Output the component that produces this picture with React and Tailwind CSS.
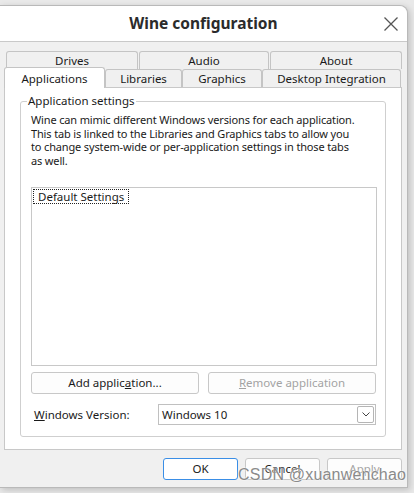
import React from "react";

const font = { fontFamily: '"Noto Sans", "Open Sans", sans-serif' };

const Tab = ({ label, className }) => (
  <div
    className={`flex items-center justify-center border border-[#c4c4c4] border-b-0 rounded-t-[3px] bg-[#f0f0f0] text-[11.5px] text-[#1a1a1a] ${className}`}
  >
    {label}
  </div>
);

const Button = ({ children, disabled, primary, className }) => (
  <button
    className={`h-[22px] rounded-[3px] border text-[11.5px] leading-none ${
      primary ? "border-[#3a8ee6] bg-white" : "border-[#c8c8c8] bg-[#fdfdfd]"
    } ${disabled ? "text-[#a3a3a3]" : "text-[#1a1a1a]"} ${className}`}
  >
    {children}
  </button>
);

const App = () => {
  return (
    <div
      className="relative w-[414px] h-[493px] overflow-hidden bg-[#e9e9e9] pt-[5px]"
      style={font}
    >
      <div className="w-[408px] h-[483px] bg-[#f0f0f0] border-t border-r border-b border-[#b9b9b9] rounded-tr-[8px] shadow-[2px_2px_6px_rgba(0,0,0,0.18)] flex flex-col">
        {/* title bar */}
        <div className="relative h-[36px] bg-white rounded-tr-[8px] border-b border-[#c9c9c9] flex items-center justify-center">
          <span className="text-[15.5px] font-bold text-[#2b2b2b] pt-[1px]">
            Wine configuration
          </span>
          <svg
            className="absolute right-[8px] top-[10px]"
            width="16"
            height="16"
            viewBox="0 0 16 16"
          >
            <path d="M1.5 1.5 L14.5 14.5 M14.5 1.5 L1.5 14.5" stroke="#555" strokeWidth="1.3" fill="none" />
          </svg>
        </div>

        <div className="pl-[4px] pt-[9px]">
          {/* tab row 1 */}
          <div className="flex h-[18px] pl-[2px] gap-[1px]">
            <Tab label="Drives" className="w-[132px]" />
            <Tab label="Audio" className="w-[130px]" />
            <Tab label="About" className="w-[132px]" />
          </div>
          {/* tab row 2 */}
          <div className="relative z-10 flex items-end h-[19px] -mt-[1px]">
            <div className="w-[101px] h-[21px] -mb-[1px] flex items-start pt-[2px] justify-center bg-white border border-[#c4c4c4] border-b-0 rounded-t-[3px] text-[11.5px] text-[#1a1a1a]">
              Applications
            </div>
            <Tab label="Libraries" className="w-[77px] h-[18px]" />
            <Tab label="Graphics" className="w-[80px] h-[18px]" />
            <Tab label="Desktop Integration" className="w-[139px] h-[18px]" />
          </div>

          {/* panel */}
          <div className="w-[398px] h-[363px] bg-white border border-[#c8c8c8] pt-[13px] px-[15px]">
            <div className="relative h-[336px] border border-[#cfcfcf] rounded-[3px] pl-[10px] pr-[8px] pt-[11px]">
              <span className="absolute -top-[8px] left-[6px] bg-white px-[1px] text-[11.5px] leading-[14px] text-[#1a1a1a]">
                Application settings
              </span>
              <p className="text-[11px] leading-[13.5px] tracking-[-0.15px] text-[#1a1a1a] whitespace-nowrap">
                Wine can mimic different Windows versions for each application.
                <br />
                This tab is linked to the Libraries and Graphics tabs to allow you
                <br />
                to change system-wide or per-application settings in those tabs
                <br />
                as well.
              </p>
              <div className="mt-[20px] h-[179px] border border-[#c8c8c8] p-[1px]">
                <div className="w-fit border border-dotted border-[#222] px-[4px] text-[11.5px] leading-[13px] text-[#1a1a1a]">
                  Default Settings
                </div>
              </div>
              <div className="mt-[6px] flex gap-[9px]">
                <Button className="w-[168px]">
                  Add applic<span className="underline">a</span>tion...
                </Button>
                <Button disabled className="w-[168px]">
                  <span className="underline">R</span>emove application
                </Button>
              </div>
              <div className="mt-[10px] flex items-center">
                <span className="w-[127px] pl-[3px] text-[11.5px] text-[#1a1a1a]">
                  <span className="underline">W</span>indows Version:
                </span>
                <div className="w-[218px] h-[21px] border border-[#c0c0c0] flex items-center justify-between pl-[3px] pr-[1px]">
                  <span className="text-[11.5px] text-[#1a1a1a]">Windows 10</span>
                  <div className="w-[17px] h-[17px] border border-[#b5b5b5] rounded-[2px] flex items-center justify-center">
                    <svg width="8" height="5" viewBox="0 0 8 5">
                      <path d="M0.5 0.5 L4 4 L7.5 0.5" stroke="#444" strokeWidth="1" fill="none" />
                    </svg>
                  </div>
                </div>
              </div>
            </div>
          </div>

          {/* dialog buttons */}
          <div className="mt-[8px] flex justify-end gap-[7px] w-[398px]">
            <Button primary className="w-[75px]">OK</Button>
            <Button className="w-[75px]">Cancel</Button>
            <Button disabled className="w-[75px]">Apply</Button>
          </div>
        </div>
      </div>

      {/* watermark */}
      <span
        className="absolute left-[238px] top-[463px] text-[16px] text-[#8a8a8a] tracking-[0.2px]"
        style={{
          fontFamily: '"Liberation Sans", Arial, sans-serif',
          textShadow: "0 0 2px #fff, 0 0 1px #fff",
        }}
      >
        CSDN @xuanwenchao
      </span>
    </div>
  );
};

export default App;
